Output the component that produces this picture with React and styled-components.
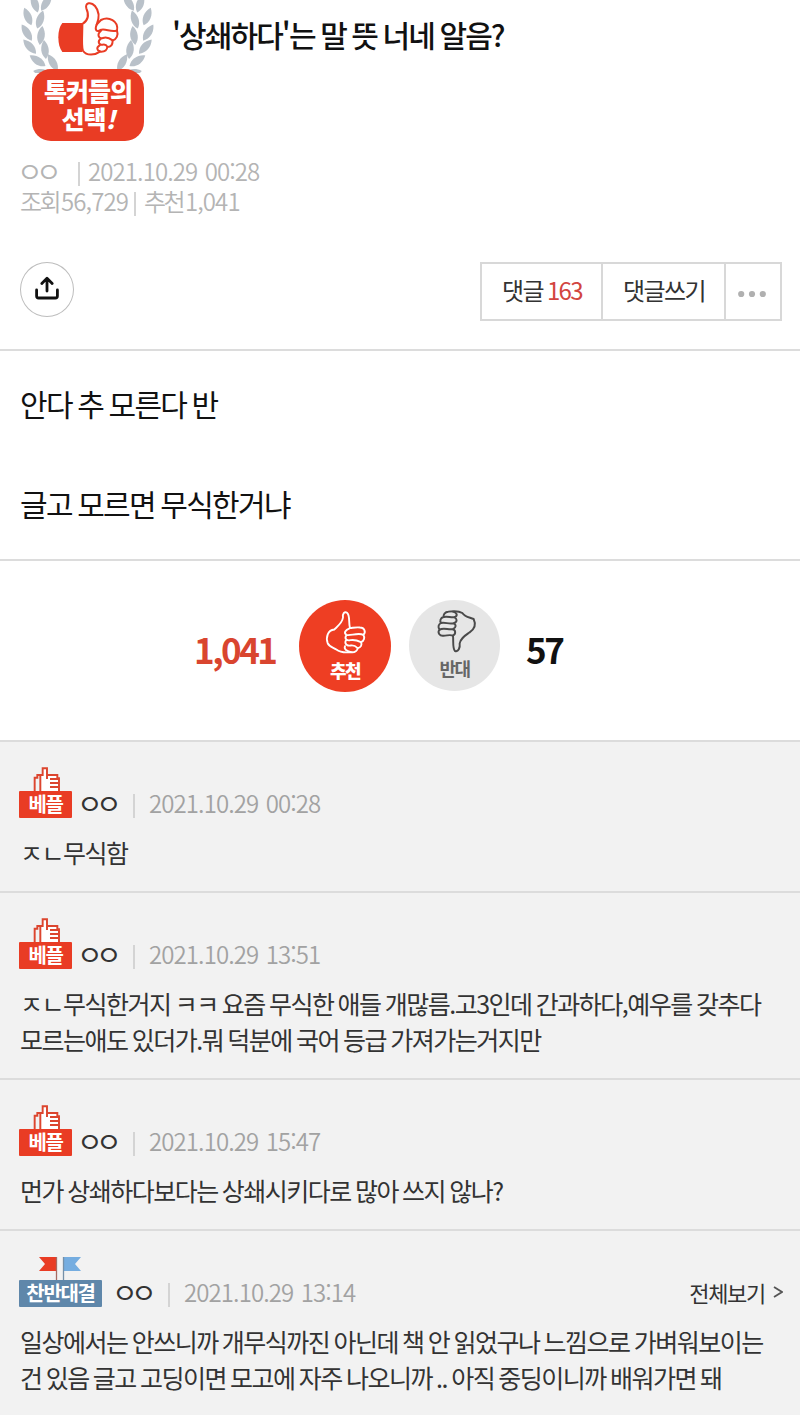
import React from 'react';
import styled, { createGlobalStyle } from 'styled-components';

const GlobalStyle = createGlobalStyle`
  * {
    box-sizing: border-box;
  }

  body {
    margin: 0;
    background: #ffffff;
    font-family: 'Noto Sans CJK KR', 'Noto Sans', sans-serif;
  }

  button {
    padding: 0;
    border: 0;
    background: none;
    font: inherit;
    letter-spacing: inherit;
  }

  svg {
    display: block;
  }
`;

const Page = styled.div`
  width: 800px;
  height: 1415px;
  overflow: hidden;
  white-space: nowrap;
`;

const PostHeader = styled.header`
  height: 351px;
  padding: 0 18px 0 20px;
  border-bottom: 2px solid #dcdcdc;
`;

const TitleRow = styled.div`
  display: flex;
  height: 157px;
`;

const AwardBadge = styled.div`
  display: flex;
  flex-direction: column;
  align-items: center;
  width: 134px;
`;

const AwardLabel = styled.div`
  width: 112px;
  height: 72px;
  margin: -4px 0 0 2px;
  padding-top: 7px;
  border-radius: 19px;
  background: #e93c24;
  color: #ffffff;
  font-size: 25px;
  font-weight: 900;
  line-height: 28px;
  letter-spacing: -1px;
  text-align: center;
`;

const Title = styled.h1`
  margin: 13px 0 0 18px;
  color: #111111;
  font-size: 30px;
  font-weight: 500;
  line-height: 42px;
  letter-spacing: -1.9px;
  word-spacing: -1px;
`;

const Meta = styled.div`
  display: flex;
  align-items: center;
  height: 30px;
  padding-bottom: 2px;
  color: #b4b4b4;
  font-size: 24px;
  font-weight: 350;
  line-height: 28px;
  letter-spacing: -0.9px;
  word-spacing: 1.5px;
`;

const Divider = styled.span`
  width: 2px;
  height: 24px;
  margin: 5px ${props => props.$right}px 0 ${props => props.$left}px;
  background: #d4d4d4;
`;

const MetaLabel = styled.span`
  width: 41px;
  letter-spacing: -2.6px;
`;

const Toolbar = styled.div`
  display: flex;
  justify-content: space-between;
  margin-top: 45px;
`;

const ShareButton = styled.button`
  display: flex;
  align-items: center;
  justify-content: center;
  width: 54px;
  height: 55px;
  padding-bottom: 4px;
  border: 1px solid #bdbdbd;
  border-radius: 50%;
`;

const ButtonGroup = styled.div`
  display: flex;
  height: 59px;
  border: 2px solid #d8d8d8;
`;

const GroupButton = styled.button`
  display: flex;
  align-items: center;
  justify-content: center;
  width: ${props => props.$width}px;
  padding: ${props => props.$padding || '0 0 4px 1px'};
  color: #333333;
  font-size: 24px;
  letter-spacing: -1.6px;

  & + & {
    border-left: 2px solid #d8d8d8;
  }
`;

const CommentCount = styled.span`
  margin-left: 4px;
  color: #d2453f;
`;

const PostBody = styled.div`
  height: 210px;
  padding: 27px 20px 0;
  border-bottom: 2px solid #dcdcdc;
  color: #111111;
  font-size: 30px;
  line-height: 50px;
  letter-spacing: -1.7px;
  word-spacing: -1.3px;
`;

const Votes = styled.div`
  display: flex;
  height: 179px;
  padding: 39px 0 0 194px;
`;

const VoteCount = styled.strong`
  width: ${props => props.$width}px;
  color: ${props => props.$color};
  font-size: 35px;
  font-weight: 700;
  line-height: 98px;
  letter-spacing: -2.5px;
`;

const VoteButton = styled.button`
  display: flex;
  flex-direction: column;
  align-items: center;
  width: ${props => props.$size}px;
  height: ${props => props.$size}px;
  margin-right: ${props => props.$gap}px;
  border-radius: 50%;
  background: ${props => props.$background};
  color: ${props => props.$color};
  font-size: 18px;
  font-weight: ${props => props.$weight};
  line-height: 22px;
  letter-spacing: -1.6px;
`;

const CommentList = styled.ul`
  margin: 0;
  padding: 0;
  list-style: none;
  background: #f2f2f2;
`;

const CommentItem = styled.li`
  padding: 25px 17px 21px 19px;
  border-top: 2px solid #dcdcdc;
`;

const CommentHead = styled.div`
  display: flex;
  align-items: flex-end;
  height: 51px;
`;

const Badge = styled.div`
  width: ${props => props.$width}px;
  margin-right: ${props => props.$gap}px;
`;

const BadgeLabel = styled.div`
  height: 27px;
  border-radius: 1px;
  background: ${props => props.$background};
  color: #ffffff;
  font-size: 20px;
  font-weight: 700;
  line-height: 25px;
  letter-spacing: -1.3px;
  text-align: center;
`;

const Author = styled.span`
  width: 37px;
  margin-left: ${props => props.$offset || 0}px;
  color: ${props => props.$color || '#333333'};
  font-size: 28px;
  line-height: 30px;
  letter-spacing: -6.8px;
`;

const Time = styled.time`
  color: #a2a2a2;
  font-size: 24px;
  font-weight: 350;
  line-height: 30px;
  letter-spacing: -0.9px;
  word-spacing: 1.5px;
`;

const MoreLink = styled.a`
  display: flex;
  align-items: center;
  gap: 8px;
  margin-left: auto;
  color: #333333;
  font-size: 22px;
  line-height: 30px;
  letter-spacing: -1.3px;
`;

const CommentText = styled.p`
  margin: 16px 0 0 1px;
  color: #333333;
  font-size: 25px;
  line-height: 36px;
  letter-spacing: -1.5px;
  word-spacing: -1.35px;
`;

// x, y and rotation of every leaf on the left branch
const leaves = [
  [35, 4, -18],
  [28, 17, -22],
  [27, 33, -32],
  [30, 47, -42],
  [38, 61, -56],
  [46, 3, 32],
  [40, 20, 18],
  [41, 36, 8],
  [45, 50, -6],
  [53, 63, -30],
  [43, 73, -78],
];

const Branch = () => (
  <g fill="#b9c1c9">
    {leaves.map(([x, y, angle]) => (
      <path
        key={`${x}-${y}`}
        d="M0-10C5-4 5 4 0 9C-5 4-5-4 0-10Z"
        transform={`translate(${x} ${y}) rotate(${angle})`}
      />
    ))}
  </g>
);

const LaurelIcon = () => (
  <svg width="134" height="73" viewBox="20 0 134 73">
    <Branch />
    <g transform="translate(175 0) scale(-1 1)">
      <Branch />
    </g>
    <g transform="translate(15 0) scale(0.3333)" strokeWidth="6" strokeLinecap="round" strokeLinejoin="round">
      <path d="M202 69H142Q130 84 130 112Q130 140 142 156H202Z" fill="#e93c24" />
      <path
        d="M202 72C218 62 223 45 214 25C209 8 228 4 240 18C252 32 255 50 245 74L258 60C280 48 312 62 306 92C311 106 304 118 293 122C293 136 286 141 277 141C276 152 268 156 255 155C240 166 214 168 204 152C198 140 203 85 202 72Z"
        fill="#ffffff"
        stroke="#e93c24"
      />
      <path
        d="M245 74C238 90 246 98 256 90C270 84 286 97 304 92M258 92C244 104 252 118 264 114C276 110 286 116 293 121M258 116C246 124 252 136 262 134C270 132 275 136 277 140M254 136C243 142 246 152 255 154"
        fill="none"
        stroke="#e93c24"
      />
    </g>
  </svg>
);

const ShareIcon = () => (
  <svg width="24" height="24" viewBox="0 0 24 24" fill="none" stroke="#111" strokeWidth="2.8" strokeLinecap="round" strokeLinejoin="round">
    <path d="M12 15V2.5M6.8 7.5L12 2.2L17.2 7.5M1.6 14V20Q1.6 22 3.6 22H20.4Q22.4 22 22.4 20V14" />
  </svg>
);

const DotsIcon = () => (
  <svg width="28" height="8" viewBox="0 0 28 8" fill="#b0b0b0">
    <circle cx="3.2" cy="4" r="3.1" />
    <circle cx="14" cy="4" r="3.1" />
    <circle cx="24.8" cy="4" r="3.1" />
  </svg>
);

const ThumbUpIcon = () => (
  <svg width="92" height="59" viewBox="0 0 92 59">
    <g
      transform="translate(-4 -4.5) scale(0.3333)"
      fill="none"
      stroke="#ffffff"
      strokeWidth="5.6"
      strokeLinecap="round"
      strokeLinejoin="round"
    >
      <path d="M165 98C160 80 166 60 156 52C148 46 142 56 144 66C142 82 128 92 118 102C98 104 92 125 98 143C102 154 116 156 124 162C134 170 150 172 168 170C180 172 188 164 188 158C198 156 202 148 198 140C208 136 210 126 205 118C214 110 208 96 195 96C185 94 175 97 165 98Z" />
      <path d="M165 98C150 104 146 112 154 118C164 122 190 110 205 118M154 119C147 130 156 136 166 134C178 132 190 136 198 140M152 136C148 146 158 152 168 150C176 149 184 154 188 158M150 152C146 162 156 166 168 170" />
    </g>
  </svg>
);

const ThumbDownIcon = () => (
  <svg width="92" height="57" viewBox="0 0 92 57">
    <g
      transform="translate(-114 -5) scale(0.3333)"
      fill="none"
      stroke="#4a4a4a"
      strokeWidth="5.8"
      strokeLinecap="round"
      strokeLinejoin="round"
    >
      <path d="M474 122C476 140 472 160 480 168C490 172 496 158 494 146C496 130 510 122 524 112C542 100 542 85 536 72C520 66 510 66 502 54C490 46 474 48 460 50C450 50 444 60 446 66C436 68 434 78 438 84C430 88 428 96 434 104C426 112 434 124 446 122C456 122 466 118 474 122Z" />
      <path d="M446 66C458 62 470 70 480 66C490 60 484 52 474 50M438 84C450 80 464 90 478 84C488 80 486 70 478 67M434 104C446 96 462 106 474 102C484 98 484 88 476 86M474 122C484 116 482 104 472 103" />
    </g>
  </svg>
);

const BestThumbIcon = () => (
  <svg width="53" height="24" viewBox="0 0 53 24">
    <g transform="scale(0.3333) translate(-57 -94)">
      <path d="M122 120H128V100H140V118H172V130H176V166H122Z" fill="#ffffff" />
      <path
        d="M104 166V126H112V118H128V98H141V118H172V128H177V166M121 120V166M141 118V130M150 130H176M150 142H176M150 154H176"
        fill="none"
        stroke="#dc452e"
        strokeWidth="5.8"
      />
    </g>
  </svg>
);

const FlagsIcon = () => (
  <svg width="83" height="23" viewBox="0 0 83 23">
    <path d="M20 0H37V14H20L26 7Z" fill="#e93c24" />
    <path d="M45 0H62L56 7L62 14H45Z" fill="#75ade0" />
    <path d="M37.5 0V23" stroke="#a66a63" strokeWidth="1.3" />
    <path d="M44.5 0V23" stroke="#7590a8" strokeWidth="1.3" />
  </svg>
);

const BestBadge = () => (
  <Badge $width={53} $gap={5}>
    <BestThumbIcon />
    <BadgeLabel $background="#e93c24">베플</BadgeLabel>
  </Badge>
);

const DebateBadge = () => (
  <Badge $width={83} $gap={10}>
    <FlagsIcon />
    <BadgeLabel $background="#5f87aa">찬반대결</BadgeLabel>
  </Badge>
);

const comments = [
  { time: '2021.10.29 00:28', lines: ['ㅈㄴ무식함'] },
  {
    time: '2021.10.29 13:51',
    lines: [
      'ㅈㄴ무식한거지 ㅋㅋ 요즘 무식한 애들 개많름.고3인데 간과하다,예우를 갖추다',
      '모르는애도 있더가.뭐 덕분에 국어 등급 가져가는거지만',
    ],
  },
  { time: '2021.10.29 15:47', lines: ['먼가 상쇄하다보다는 상쇄시키다로 많아 쓰지 않나?'] },
  {
    time: '2021.10.29 13:14',
    debate: true,
    lines: [
      '일상에서는 안쓰니까 개무식까진 아닌데 책 안 읽었구나 느낌으로 가벼워보이는',
      '건 있음 글고 고딩이면 모고에 자주 나오니까 .. 아직 중딩이니까 배워가면 돼',
    ],
  },
];

const Comment = ({ time, lines, debate }) => (
  <CommentItem>
    <CommentHead>
      {debate ? <DebateBadge /> : <BestBadge />}
      <Author>ㅇㅇ</Author>
      <Divider $left={19} $right={14} />
      <Time>{time}</Time>
      {debate && (
        <MoreLink>
          전체보기
          <svg width="10" height="12" viewBox="0 0 10 12" fill="none" stroke="#555" strokeWidth="1.8">
            <path d="M1 1L9 6L1 11" />
          </svg>
        </MoreLink>
      )}
    </CommentHead>
    <CommentText>
      {lines.map(line => (
        <React.Fragment key={line}>
          {line}
          <br />
        </React.Fragment>
      ))}
    </CommentText>
  </CommentItem>
);

const App = () => (
  <Page lang="ko">
    <GlobalStyle />
    <PostHeader>
      <TitleRow>
        <AwardBadge>
          <LaurelIcon />
          <AwardLabel>
            톡커들의
            <br />
            선택<i>!</i>
          </AwardLabel>
        </AwardBadge>
        <Title>'상쇄하다'는 말 뜻 너네 알음?</Title>
      </TitleRow>
      <Meta>
        <Author $offset={-3} $color="#b4b4b4">
          ㅇㅇ
        </Author>
        <Divider $left={24} $right={8} />
        <span>2021.10.29 00:28</span>
      </Meta>
      <Meta>
        <MetaLabel>조회</MetaLabel>
        <span>56,729</span>
        <Divider $left={6} $right={8} />
        <MetaLabel>추천</MetaLabel>
        <span>1,041</span>
      </Meta>
      <Toolbar>
        <ShareButton aria-label="공유">
          <ShareIcon />
        </ShareButton>
        <ButtonGroup>
          <GroupButton $width={119}>
            댓글<CommentCount>163</CommentCount>
          </GroupButton>
          <GroupButton $width={123}>댓글쓰기</GroupButton>
          <GroupButton $width={56} $padding="5px 2px 0 0" aria-label="더보기">
            <DotsIcon />
          </GroupButton>
        </ButtonGroup>
      </Toolbar>
    </PostHeader>
    <PostBody>
      안다 추 모른다 반
      <br />
      <br />
      글고 모르면 무식한거냐
    </PostBody>
    <Votes>
      <VoteCount $width={105} $color="#d9452f">
        1,041
      </VoteCount>
      <VoteButton $size={92} $gap={18} $background="#ee3e23" $color="#ffffff" $weight={900}>
        <ThumbUpIcon />
        추천
      </VoteButton>
      <VoteButton $size={91} $gap={26} $background="#e6e6e6" $color="#666666" $weight={700}>
        <ThumbDownIcon />
        반대
      </VoteButton>
      <VoteCount $width={60} $color="#111111">
        57
      </VoteCount>
    </Votes>
    <CommentList>
      {comments.map(comment => (
        <Comment key={comment.time} {...comment} />
      ))}
    </CommentList>
  </Page>
);

export default App;
